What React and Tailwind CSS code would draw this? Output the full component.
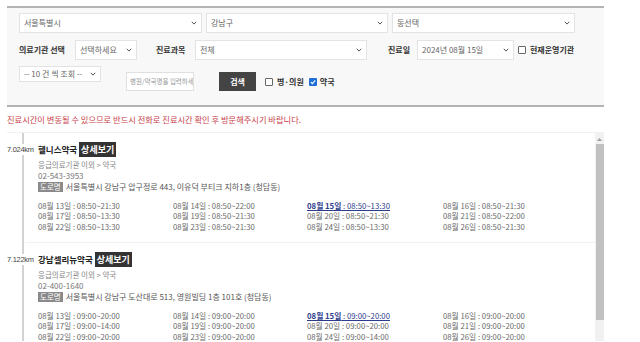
import React from "react";

const Chevron = () => (
  <svg width="6" height="4" viewBox="0 0 6 4" className="shrink-0">
    <path d="M0.8 0.8 L3 3.1 L5.2 0.8" fill="none" stroke="#555" strokeWidth="1" />
  </svg>
);

const Select = ({ className, children }) => (
  <div
    className={`flex items-center justify-between bg-white border border-[#e3e3e3] pl-[4px] pr-[4px] text-[8px] text-[#666] ${className}`}
  >
    <span className="whitespace-nowrap overflow-hidden">{children}</span>
    <Chevron />
  </div>
);

const Box = ({ checked }) =>
  checked ? (
    <span className="block w-[8px] h-[8px] rounded-[1px] bg-[#1f6fd6] shrink-0">
      <svg width="8" height="8" viewBox="0 0 8 8" className="block">
        <path d="M1.8 4.1 L3.4 5.6 L6.2 2.3" fill="none" stroke="#fff" strokeWidth="1.1" />
      </svg>
    </span>
  ) : (
    <span className="block w-[8px] h-[8px] rounded-[1px] border border-[#666] bg-white shrink-0" />
  );

const Label = ({ children, className = "" }) => (
  <span className={`text-[8px] font-bold text-[#333] whitespace-nowrap shrink-0 ${className}`}>{children}</span>
);

const items = [
  {
    dist: "7.024km",
    name: "헬니스약국",
    phone: "02-543-3953",
    addr: "서울특별시 강남구 압구정로 443, 이유덕 부티크 지하1층 (청담동)",
    rows: [
      [["13", "08:50~21:30"], ["14", "08:50~22:00"], ["15", "08:50~13:30"], ["16", "08:50~21:30"]],
      [["17", "08:50~13:30"], ["19", "08:50~21:30"], ["20", "08:50~21:30"], ["21", "08:50~22:00"]],
      [["22", "08:50~13:30"], ["23", "08:50~21:30"], ["24", "08:50~13:30"], ["26", "08:50~21:30"]],
    ],
  },
  {
    dist: "7.122km",
    name: "강남셀리뉴약국",
    phone: "02-400-1640",
    addr: "서울특별시 강남구 도산대로 513, 영원빌딩 1층 101호 (청담동)",
    rows: [
      [["13", "09:00~20:00"], ["14", "09:00~20:00"], ["15", "09:00~20:00"], ["16", "09:00~20:00"]],
      [["17", "09:00~14:00"], ["19", "09:00~20:00"], ["20", "09:00~20:00"], ["21", "09:00~20:00"]],
      [["22", "09:00~20:00"], ["23", "09:00~20:00"], ["24", "09:00~14:00"], ["26", "09:00~20:00"]],
    ],
  },
];

const Item = ({ item }) => (
  <div className="flex">
    <div className="w-[18px] shrink-0 bg-[linear-gradient(to_right,transparent_15px,#d2d2d2_15px,#d2d2d2_17px,transparent_17px)]">
      <div className="mt-[10px] inline-block bg-white whitespace-nowrap text-[7.5px] leading-[11px] text-[#444] font-['Liberation_Sans',sans-serif] tracking-[-0.3px]">
        {item.dist}
      </div>
    </div>
    <div className="flex-1 border-b border-[#f1f1f1] pl-[13px] pt-[9px] pb-[10px]">
      <div className="flex items-center gap-[2px] h-[15px]">
        <span className="text-[8.5px] font-bold text-[#222]">{item.name}</span>
        <span className="bg-[#333] text-white text-[9px] font-bold px-[2px] h-[15px] leading-[15px]">상세보기</span>
      </div>
      <div className="mt-[1.5px] text-[7.5px] leading-[11px] text-[#888]">응급의료기관 이외 &gt; 약국</div>
      <div className="text-[8px] leading-[11px] text-[#777]">{item.phone}</div>
      <div className="mt-[1px] flex items-center gap-[3px] h-[10px]">
        <span className="bg-[#8a8a8a] text-white text-[7.5px] px-[2px] h-[10px] leading-[10px]">도로명</span>
        <span className="text-[8px] text-[#555] whitespace-nowrap">{item.addr}</span>
      </div>
      <div className="mt-[9px] grid grid-cols-[135px_134px_136px_1fr] text-[7.75px] leading-[10.5px] text-[#6a6a6a]">
        {item.rows.flat().map(([d, t], i) =>
          d === "15" ? (
            <span key={i} className="underline text-[#2c3c8c] whitespace-nowrap">
              <b>08월 15일</b> : {t}
            </span>
          ) : (
            <span key={i} className="whitespace-nowrap">
              08월 {d}일 : {t}
            </span>
          )
        )}
      </div>
    </div>
  </div>
);

export default function App() {
  return (
    <div className="w-[640px] h-[342px] overflow-hidden bg-white font-['Noto_Sans_CJK_KR',sans-serif]">
      <div className="ml-[7px] w-[597px] pt-[6px]">
        <div className="border-t-2 border-b-2 border-[#b3b3b3] bg-[#f8f8f8] pl-[12px] pt-[5px] h-[101px]">
          <div className="flex gap-[4px]">
            <Select className="w-[183px] h-[20px]">서울특별시</Select>
            <Select className="w-[182px] h-[20px]">강남구</Select>
            <Select className="w-[183px] h-[20px]">동선택</Select>
          </div>
          <div className="flex items-center mt-[7px] h-[20px]">
            <Label className="w-[56px]">의료기관 선택</Label>
            <Select className="w-[62px] h-[20px]">선택하세요</Select>
            <Label className="ml-[19px] w-[39px]">진료과목</Label>
            <Select className="w-[172px] h-[20px]">전체</Select>
            <Label className="ml-[21px] w-[29px]">진료일</Label>
            <Select className="w-[97px] h-[20px]">2024년 08월 15일</Select>
            <span className="ml-[4px]"><Box /></span>
            <Label className="ml-[4px]">현재운영기관</Label>
          </div>
          <div className="flex items-start mt-[6px]">
            <Select className="w-[82px] h-[16px]">-- 10 건 씩 조회 --</Select>
            <div className="flex items-center mt-[6px] h-[19px]">
              <div className="ml-[25px] w-[68px] h-[19px] bg-white border border-[#e0e0e0] pl-[3px] flex items-center overflow-hidden">
                <span className="text-[6.5px] text-[#999] whitespace-nowrap">병원/약국명을 입력하세요</span>
              </div>
              <div className="ml-[25px] w-[37px] h-[19px] bg-[#444] text-white text-[8px] font-bold flex items-center justify-center">
                검색
              </div>
              <span className="ml-[9px]"><Box /></span>
              <Label className="ml-[4px]">병·의원</Label>
              <span className="ml-[5px]"><Box checked /></span>
              <Label className="ml-[3px]">약국</Label>
            </div>
          </div>
        </div>
        <div className="h-[25px] flex items-center text-[8.25px] text-[#c9404a] whitespace-nowrap">
          진료시간이 변동될 수 있으므로 반드시 전화로 진료시간 확인 후 방문해주시기 바랍니다.
        </div>
        <div className="flex h-[209px] overflow-hidden border-t border-[#f1f1f1]">
          <div className="flex-1">
            {items.map((it) => (
              <Item key={it.name} item={it} />
            ))}
          </div>
          <div className="w-[9px] shrink-0 bg-[#f1f1f1] flex flex-col items-stretch">
            <div className="h-[10px] mt-[1px] flex items-center justify-center">
              <svg width="5" height="3" viewBox="0 0 5 3">
                <path d="M0 3 L2.5 0 L5 3 Z" fill="#a0a0a0" />
              </svg>
            </div>
            <div className="h-[176px] bg-[#c1c1c1] mx-[0.5px]" />
          </div>
        </div>
      </div>
    </div>
  );
}
